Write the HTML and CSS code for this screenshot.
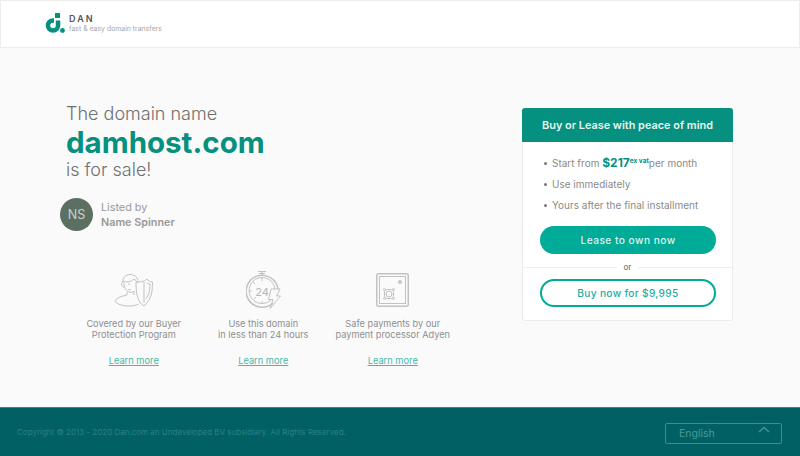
FILE: index.html
```html
<!DOCTYPE html>
<html>
  <head>
    <meta charset="utf-8" />
    <meta name="viewport" content="width=device-width, initial-scale=1.0" />
    <title>damhost.com is for sale</title>
    <link rel="stylesheet" href="styles.css">
  </head>
  <body>
    <header class="topbar">
      <svg class="logo" width="20" height="20" viewBox="0 0 20 20">
        <rect x="10" y="0" width="5" height="5" fill="#05907f" />
        <path d="M8 5.200a7.300 7.300 0 1 0 7.300 7.300V7.500h-4.500v5a2.800 2.800 0 1 1-2.800-2.800h1V5.200z" fill="#05907f" />
        <circle cx="17.500" cy="17.500" r="2.400" fill="#05907f" />
      </svg>
      <div class="brand">
        <div class="brand-name">DAN</div>
        <div class="brand-tag">fast &amp; easy domain transfers</div>
      </div>
    </header>

    <main class="content">
      <section class="left">
        <div class="headline">
          <p class="light">The domain name</p>
          <h1>damhost.com</h1>
          <p class="light">is for sale!</p>
        </div>
        <div class="seller">
          <div class="avatar">NS</div>
          <div>
            <div class="listed">Listed by</div>
            <div class="seller-name">Name Spinner</div>
          </div>
        </div>
        <div class="features">
          <div class="feature">
            <div class="feature-icon">
              <svg width="38" height="33" viewBox="0 0 38 33" fill="none" stroke="#c2c2c2" stroke-width="1">
                <path d="M8 9c-1-5 3-8.500 7-8.500s7 2 8 6" />
                <path d="M8 7c3 1.500 8 1 11-2 1.500 1 3 2.500 4 4" />
                <path d="M8 8c-2 0-2 5 1 5M9 9c0 4 1 7 5 9 2 1 4 0 5-1" />
                <path d="M13 10h2M13 15c1 1 2 1 3 0" />
                <path d="M12 18v3C7 22 .500 24 .500 27c0 3 7 5 14 5 4 0 7-1 9-2" />
                <path d="M19 17v4" />
                <path d="M21 8c6 0 9-1 11-3 1.500 2 3 3 5.500 3 0 10-1 17-8.500 24C22 28 21 18 21 8z" />
                <path d="M29 8v21M32 9c1 1 2 1 3 1 0 6-1 11-4.500 15" />
              </svg>
            </div>
            <p>Covered by our Buyer<br>Protection Program</p>
            <a href="#">Learn more</a>
          </div>
          <div class="feature">
            <div class="feature-icon">
              <svg width="35" height="38" viewBox="0 0 35 38" fill="none" stroke="#c2c2c2" stroke-width="1">
                <path d="M12 .500h8M16 .500v3.500M13 2.500h6" />
                <path d="M27 32a16 16 0 1 1 5-14" stroke-width="1.500" />
                <path d="M25 29a13 13 0 1 1 4-11" />
                <path d="M16 7v3M3 20h3M16 30v3M7 11l2 2M8 28l2-2" />
                <path d="M25 18h9l-3.500 7h4L24 37.500l3-9h-4.500z" />
                <text class="clock-label" x="16" y="24.500" text-anchor="middle">24</text>
              </svg>
            </div>
            <p>Use this domain<br>in less than 24 hours</p>
            <a href="#">Learn more</a>
          </div>
          <div class="feature">
            <div class="feature-icon">
              <svg width="33" height="34" viewBox="0 0 33 34" fill="none" stroke="#c2c2c2" stroke-width="1">
                <rect x=".750" y=".750" width="31.500" height="32.500" rx="2" stroke-width="1.500" />
                <rect x="3.500" y="3.500" width="26" height="27" />
                <circle cx="24" cy="9" r="1.500" fill="#cfcfcf" />
                <rect x="8.500" y="16.500" width="9" height="9" rx="2" />
                <circle cx="13" cy="21" r="3" />
                <circle cx="8.500" cy="16.500" r="1" />
                <circle cx="17.500" cy="16.500" r="1" />
                <circle cx="8.500" cy="25.500" r="1" />
                <circle cx="17.500" cy="25.500" r="1" />
              </svg>
            </div>
            <p>Safe payments by our<br>payment processor Adyen</p>
            <a href="#">Learn more</a>
          </div>
        </div>
      </section>

      <aside class="card">
        <div class="card-head">Buy or Lease with peace of mind</div>
        <ul class="perks">
          <li>Start from <b>$217</b><sup>ex vat</sup>per month</li>
          <li>Use immediately</li>
          <li>Yours after the final installment</li>
        </ul>
        <a class="btn btn-fill" href="#">Lease to own now</a>
        <div class="divider"><span>or</span></div>
        <a class="btn btn-line" href="#">Buy now for $9,995</a>
      </aside>
    </main>

    <footer class="bottom">
      <div class="copy">Copyright © 2013 - 2020 Dan.com an Undeveloped BV subsidiary. All Rights Reserved.</div>
      <div class="lang">
        <span>English</span>
        <svg width="12" height="7" viewBox="0 0 12 7" fill="none" stroke="#3f9494" stroke-width="1.500"><path d="M1 6l5-4.500L11 6" /></svg>
      </div>
    </footer>
  </body>
</html>
```
FILE: styles.css
```css
* {
  box-sizing: border-box;
}

html,
body {
  margin: 0;
  height: 100%;
  overflow: hidden;
}

body {
  display: flex;
  flex-direction: column;
  background: #fafafa;
  font-family: Inter, "Liberation Sans", sans-serif;
  color: #757575;
}

a {
  color: inherit;
}

.topbar {
  display: flex;
  align-items: center;
  height: 48px;
  padding: 0 0 2px 44px;
  background: #fff;
  border: 1px solid #ececec;
}

.logo {
  margin-right: 4px;
}

.brand-name {
  font-size: 9px;
  line-height: 10px;
  font-weight: 600;
  letter-spacing: 2px;
  color: #555;
}

.brand-tag {
  font-size: 6.900px;
  line-height: 9px;
  color: #a8a8a8;
}

.content {
  flex: 1;
  display: flex;
  justify-content: space-between;
  padding: 52px 67px 0 60px;
}

.left {
  width: 400px;
}

.headline {
  padding-left: 6px;
}

.light {
  margin: 0;
  font-size: 18px;
  line-height: 28px;
  font-weight: 300;
  color: #6f6f6f;
}

h1 {
  margin: 0;
  font-size: 29.500px;
  line-height: 28px;
  font-weight: 700;
  color: #05907f;
}

.seller {
  display: flex;
  align-items: center;
  gap: 8px;
  margin-top: 14px;
  font-size: 10.800px;
  line-height: 15px;
  color: #999;
}

.avatar {
  display: flex;
  align-items: center;
  justify-content: center;
  width: 33px;
  height: 33px;
  border-radius: 50%;
  background: #5b6f62;
  font-size: 12.500px;
  color: #c9d3cd;
}

.seller-name {
  font-weight: 600;
}

.features {
  display: grid;
  grid-template-columns: repeat(3, 129.500px);
  margin: 39px 0 0 9px;
}

.feature {
  display: flex;
  flex-direction: column;
  align-items: center;
  text-align: center;
  font-size: 9.200px;
  line-height: 11px;
  color: #8f8f8f;
}

.feature-icon {
  display: flex;
  align-items: center;
  justify-content: center;
  height: 40px;
}

.feature p {
  margin: 8px 0 0;
}

.feature a {
  margin-top: 15px;
  font-size: 9.300px;
  color: #4db6a8;
}

.clock-label {
  font-size: 11px;
  fill: #b5b5b5;
  stroke: none;
}

.card {
  width: 211px;
  height: 213px;
  margin-top: 8px;
  background: #fff;
  border: 1px solid #ececec;
  border-radius: 3px;
}

.card-head {
  height: 34px;
  margin: -1px -1px 0;
  background: #05907f;
  border-radius: 3px 3px 0 0;
  font-size: 10.900px;
  line-height: 35px;
  font-weight: 600;
  text-align: center;
  color: #e6f4f1;
}

.perks {
  margin: 10px 0 0;
  padding: 0 0 0 21px;
  list-style: none;
  font-size: 10px;
  line-height: 21px;
  color: #8a8a8a;
}

.perks li {
  white-space: nowrap;
}

.perks li::before {
  content: "";
  display: inline-block;
  width: 3px;
  height: 3px;
  margin: 0 5px 2px 0;
  border-radius: 50%;
  background: #777;
}

.perks b {
  font-size: 12px;
  color: #05907f;
}

.perks sup {
  font-size: 6.500px;
  line-height: 0;
  font-weight: 700;
  color: #05907f;
}

.btn {
  display: block;
  width: 176px;
  height: 28px;
  margin: 0 0 0 17px;
  border-radius: 14px;
  font-size: 10.200px;
  line-height: 28px;
  font-weight: 500;
  text-align: center;
  text-decoration: none;
}

.btn-fill {
  margin-top: 10px;
  background: #00ab97;
  color: #dff3ef;
  letter-spacing: .45px;
}

.btn-line {
  border: 2px solid #00ab97;
  line-height: 24px;
  color: #26ae9d;
  letter-spacing: .3px;
}

.divider {
  display: flex;
  justify-content: center;
  height: 1px;
  margin: 13px 0 11px;
  background: #eee;
}

.divider span {
  height: 11px;
  margin-top: -5px;
  padding: 0 7px;
  background: #fff;
  font-size: 8px;
  line-height: 11px;
  font-weight: 500;
  color: #777;
}

.bottom {
  display: flex;
  justify-content: space-between;
  align-items: center;
  height: 49px;
  padding: 0 18px 0 17px;
  background: #006064;
  border-top: 1px solid #3d8688;
  font-size: 8px;
  color: #2b8085;
}

.lang {
  display: flex;
  justify-content: space-between;
  align-items: center;
  width: 117px;
  height: 21px;
  margin-top: 2px;
  padding: 0 11px 0 13px;
  border: 1px solid #3f8d8f;
  border-radius: 2px;
  font-size: 10.500px;
  color: #4a9a9a;
}

.lang svg {
  margin-bottom: 7px;
}
```
